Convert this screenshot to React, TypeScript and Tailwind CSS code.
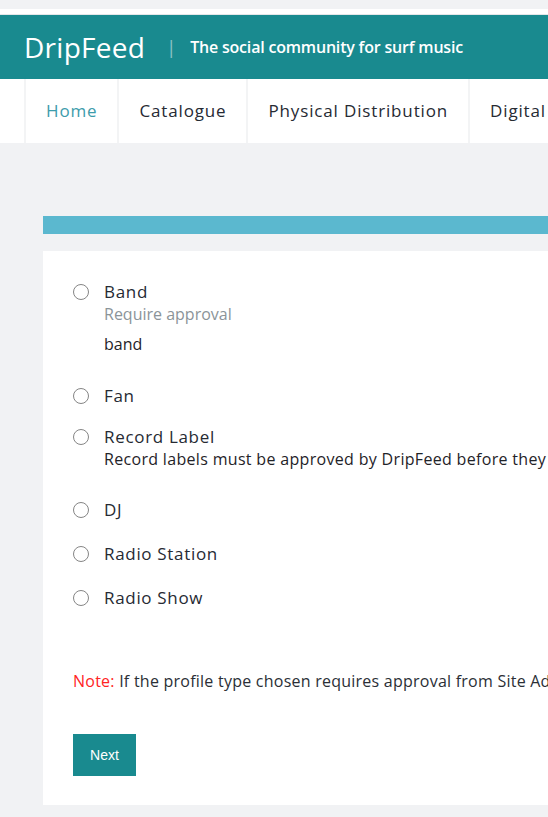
const options = [
  { label: "Band", sub: "Require approval", extra: "band" },
  { label: "Fan" },
  { label: "Record Label", desc: "Record labels must be approved by DripFeed before they can upload releases to the catalogue." },
  { label: "DJ" },
  { label: "Radio Station" },
  { label: "Radio Show" },
];

const nav = ["Home", "Catalogue", "Physical Distribution", "Digital Distribution", "Radio"];

export default function App() {
  return (
    <div className="w-full h-[817px] overflow-hidden bg-[#f1f2f4] font-['Open_Sans',sans-serif]">
      <div className="w-[1200px]">
        {/* top strip */}
        <div className="h-[9px] bg-[#f1f2f4]" />
        <div className="h-[6px] bg-white border-b border-[#e4e6e8]" />

        {/* header */}
        <header className="h-[64px] bg-[#198a8f] flex items-center pl-[24px] text-white">
          <span className="text-[28px] leading-none tracking-[0.01em]">DripFeed</span>
          <span className="ml-[21px] mr-[14px] text-[18px] text-white/50 leading-none">|</span>
          <span className="text-[16px] font-semibold tracking-[-0.012em]">The social community for surf music</span>
        </header>

        {/* nav */}
        <nav className="h-[64px] bg-white flex pl-[24px]">
          {nav.map((item, i) => (
            <div
              key={item}
              className={
                "h-full flex items-center px-[20px] border-l-2 border-[#f3f4f5] text-[17px] tracking-[0.05em] " +
                (i === 0 ? "text-[#3d9cab]" : "text-[#262a33]")
              }
            >
              {item}
            </div>
          ))}
        </nav>

        {/* content */}
        <main className="pl-[43px] pt-[73px]">
          <div className="h-[18px] bg-[#5bb8cf]" />
          <div className="mt-[17px] bg-white pl-[30px] pt-[29px] pb-[29px] text-[#1f2328]">
            <div className="flex flex-col">
              {options.map((o, i) => (
                <label
                  key={o.label}
                  className={
                    "flex items-start " +
                    (i === 0 ? "mb-[28px]" : i === 1 ? "mb-[18px]" : i === 2 ? "mb-[27px]" : "mb-[21px]")
                  }
                >
                  <span className="mt-[4px] w-[16px] h-[16px] rounded-full border border-[#858585] bg-white shrink-0" />
                  <div className="ml-[15px] flex flex-col">
                    <span className="text-[17px] leading-[23px] tracking-[0.04em] text-[#262a33]">{o.label}</span>
                    {o.sub && <span className="text-[16px] leading-[23px] text-[#8b9499]">{o.sub}</span>}
                    {o.extra && <span className="mt-[7px] text-[16px] leading-[23px] text-[#1f2328]">{o.extra}</span>}
                    {o.desc && <span className="text-[16px] leading-[23px] tracking-[0.02em] text-[#1f2328] whitespace-nowrap">{o.desc}</span>}
                  </div>
                </label>
              ))}
            </div>

            <p className="mt-[40px] text-[16px] leading-[23px] tracking-[0.015em] whitespace-nowrap text-[#2b2f36]">
              <span className="text-[#ff2424]">Note:</span> If the profile type chosen requires approval from Site Admin, your account will be pending until approved.
            </p>

            <button className="mt-[41px] w-[63px] h-[42px] bg-[#198a8f] text-white text-[14px] font-['Liberation_Sans',sans-serif]">
              Next
            </button>
          </div>
        </main>
      </div>
    </div>
  );
}
